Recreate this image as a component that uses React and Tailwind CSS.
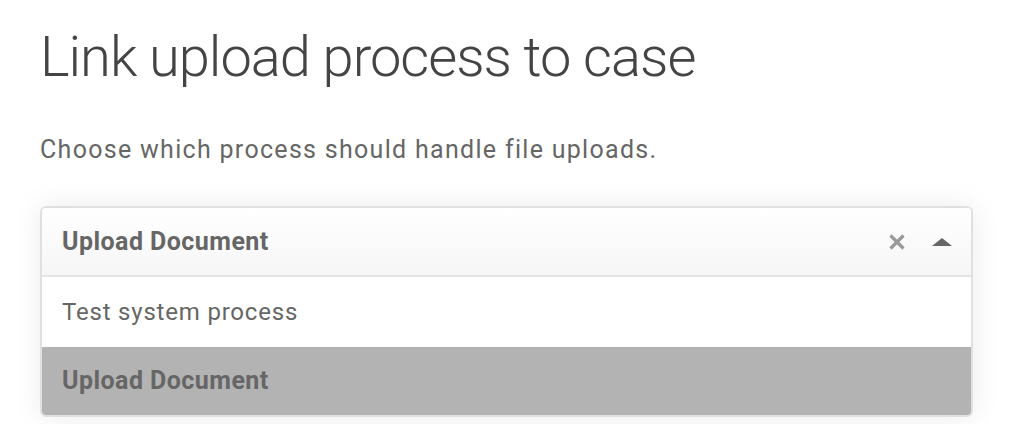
import React from "react";

export default function App() {
  return (
    <div className="w-[1020px] h-[424px] bg-white overflow-hidden" style={{ fontFamily: "Roboto, 'Liberation Sans', sans-serif" }}>
      <div className="pl-[40px] pr-[47px] pt-[25px]">
        <h1 className="text-[56px] leading-[64px] font-light text-[#444] tracking-[-1px] whitespace-nowrap">Link upload process to case</h1>
        <p className="mt-[45px] text-[25px] leading-[32px] text-[#666] tracking-[1.3px] whitespace-nowrap">Choose which process should handle file uploads.</p>
        <div className="mt-[40px] rounded-[6px] border-2 border-[#e0e0e0] shadow-[0_0_30px_rgba(0,0,0,0.08)] overflow-hidden">
          <div className="h-[69px] flex items-center pl-[20px] pr-[19px] bg-gradient-to-b from-white to-[#f6f6f6] border-b-2 border-[#e4e4e4]">
            <span className="flex-1 text-[25px] leading-[30px] font-bold text-[#666] tracking-[0.45px]">Upload Document</span>
            <svg width="16" height="16" viewBox="0 0 16 16" className="mr-[27px]">
              <path d="M1.5 1.5 L14.5 14.5 M14.5 1.5 L1.5 14.5" stroke="#999" strokeWidth="3.2" strokeLinecap="butt" />
            </svg>
            <svg width="20" height="8" viewBox="0 0 20 8" className="mt-[1px]">
              <path d="M0 8 L10 0 L20 8 Z" fill="#666" />
            </svg>
          </div>
          <div className="h-[70px] flex items-center px-[20px] bg-white text-[24px] leading-[30px] text-[#666] tracking-[0.8px]">Test system process</div>
          <div className="h-[68px] flex items-center px-[20px] bg-[#b3b3b3] text-[25px] leading-[30px] font-bold text-[#666] tracking-[0.45px]">Upload Document</div>
        </div>
      </div>
    </div>
  );
}
